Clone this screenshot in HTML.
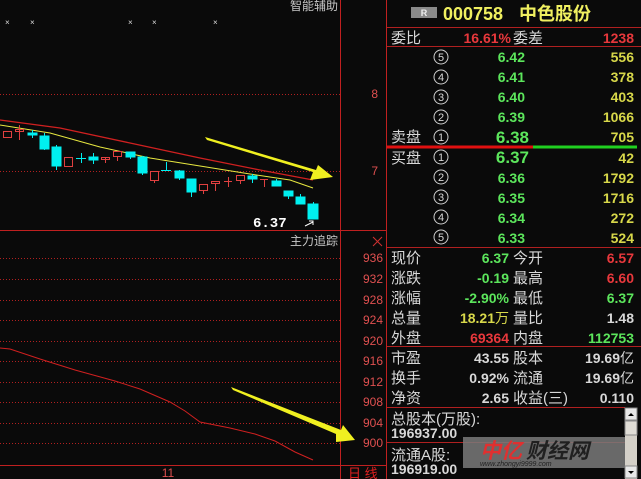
<!DOCTYPE html>
<html><head><meta charset="utf-8"><style>
html,body{margin:0;padding:0;background:#0a0a0a;width:641px;height:479px;overflow:hidden}
svg{display:block}
text{font-family:"Liberation Sans","Noto Sans CJK SC",sans-serif}
.cn{font-size:15px;fill:#d8d8d8}
.n{font-size:14px;font-weight:bold}
.g{fill:#5ce65c}.r{fill:#e8383c}.y{fill:#d8d84a}.w{fill:#d8d8d8}
.ax{font-size:12px;fill:#e05050}
.cd{font-size:11px;fill:#d8d8d8}
</style></head><body>
<svg width="641" height="479" viewBox="0 0 641 479" xmlns="http://www.w3.org/2000/svg">
<rect width="641" height="479" fill="#0a0a0a"/>
<g stroke="#c02020" stroke-width="1" fill="none">
<line x1="340.5" y1="0" x2="340.5" y2="479"/>
<line x1="386.5" y1="0" x2="386.5" y2="479"/>
<line x1="0" y1="230.5" x2="387" y2="230.5"/>
<line x1="0" y1="465.5" x2="387" y2="465.5"/>
</g>
<g stroke="#b02020" stroke-dasharray="1,2">
<line x1="0" y1="94.5" x2="340" y2="94.5"/>
<line x1="0" y1="171.5" x2="340" y2="171.5"/>
<line x1="0" y1="258.5" x2="340" y2="258.5"/>
<line x1="0" y1="279.5" x2="340" y2="279.5"/>
<line x1="0" y1="300.5" x2="340" y2="300.5"/>
<line x1="0" y1="320.5" x2="340" y2="320.5"/>
<line x1="0" y1="341.5" x2="340" y2="341.5"/>
<line x1="0" y1="361.5" x2="340" y2="361.5"/>
<line x1="0" y1="382.5" x2="340" y2="382.5"/>
<line x1="0" y1="402.5" x2="340" y2="402.5"/>
<line x1="0" y1="423.5" x2="340" y2="423.5"/>
<line x1="0" y1="443.5" x2="340" y2="443.5"/>
</g>
<text x="338" y="10" text-anchor="end" style="font-size:12px;fill:#c8c8c8">智能辅助</text>
<text x="338" y="245" text-anchor="end" style="font-size:12px;fill:#c8c8c8">主力追踪</text>
<g fill="#ddd" style="font-size:8px"><text x="5" y="25">×</text><text x="30" y="25">×</text><text x="128" y="25">×</text><text x="152" y="25">×</text><text x="213" y="25">×</text></g>
<text x="378" y="98" text-anchor="end" class="ax">8</text>
<text x="378" y="175" text-anchor="end" class="ax">7</text>
<g class="ax" text-anchor="end"><text x="383" y="262">936</text><text x="383" y="283">932</text><text x="383" y="304">928</text><text x="383" y="324">924</text><text x="383" y="345">920</text><text x="383" y="365">916</text><text x="383" y="386">912</text><text x="383" y="406">908</text><text x="383" y="427">904</text><text x="383" y="447">900</text></g>
<path d="M373 237l9 9M382 237l-9 9" stroke="#d03030"/>
<text x="168" y="477" text-anchor="middle" class="ax">11</text>
<text x="348" y="478" style="font-size:13px;fill:#e02020">日 线</text>
<polyline points="0,120 60,128 130,143 200,158 260,170 313,180" fill="none" stroke="#d02020" stroke-width="1.3"/>
<polyline points="0,125 50,133 100,147 150,158 200,166 250,174 290,180 313,188" fill="none" stroke="#e8e840" stroke-width="1"/>
<g stroke="#e04040" fill="none">
<rect x="3.5" y="131.5" width="8" height="6"/>
<line x1="19.5" y1="125" x2="19.5" y2="140"/><rect x="15.5" y="129.5" width="8" height="2"/>
<rect x="64.5" y="157.5" width="8" height="9"/>
<line x1="105.5" y1="157" x2="105.5" y2="163"/><rect x="101.5" y="157.5" width="8" height="2"/>
<rect x="113.5" y="151.5" width="8" height="5"/><line x1="117.5" y1="156" x2="117.5" y2="161"/>
<rect x="150.5" y="171.5" width="8" height="9"/><line x1="154.5" y1="180" x2="154.5" y2="183"/>
<rect x="199.5" y="184.5" width="8" height="6"/><line x1="203.5" y1="190" x2="203.5" y2="194"/>
<rect x="211.5" y="181.5" width="8" height="2"/><line x1="215.5" y1="183" x2="215.5" y2="191"/>
<line x1="224" y1="181.5" x2="232" y2="181.5"/><line x1="228.5" y1="177" x2="228.5" y2="187"/>
<rect x="236.5" y="175.5" width="8" height="5"/><line x1="240.5" y1="180" x2="240.5" y2="184"/>
<line x1="260" y1="179.5" x2="268" y2="179.5"/><line x1="264.5" y1="179" x2="264.5" y2="187"/>
</g>
<g fill="#00f0f0" stroke="#00f0f0">
<rect x="28" y="133" width="9" height="2"/><line x1="32.5" y1="130" x2="32.5" y2="138"/>
<rect x="40" y="136" width="9" height="13"/><line x1="44.5" y1="133" x2="44.5" y2="150"/>
<rect x="52" y="147" width="9" height="19"/><line x1="56.5" y1="145" x2="56.5" y2="170"/>
<line x1="76" y1="158.5" x2="86" y2="158.5"/><line x1="81.5" y1="153" x2="81.5" y2="163"/>
<rect x="89" y="157" width="9" height="3"/><line x1="93.5" y1="153" x2="93.5" y2="164"/>
<rect x="126" y="152" width="9" height="5"/><line x1="130.5" y1="157" x2="130.5" y2="159"/>
<rect x="138" y="157" width="9" height="16"/><line x1="142.5" y1="156" x2="142.5" y2="175"/>
<line x1="161" y1="170.5" x2="171" y2="170.5"/><line x1="166.5" y1="162" x2="166.5" y2="171"/>
<rect x="175" y="171" width="9" height="7"/><line x1="179.5" y1="170" x2="179.5" y2="180"/>
<rect x="187" y="179" width="9" height="13"/><line x1="191.5" y1="192" x2="191.5" y2="197"/>
<rect x="248" y="176" width="9" height="3"/><line x1="252.5" y1="174" x2="252.5" y2="183"/>
<rect x="272" y="181" width="9" height="5"/><line x1="276.5" y1="179" x2="276.5" y2="186"/>
<rect x="284" y="191" width="9" height="5"/><line x1="288.5" y1="196" x2="288.5" y2="199"/>
<rect x="296" y="197" width="9" height="7"/><line x1="300.5" y1="194" x2="300.5" y2="197"/>
<rect x="308" y="204" width="10" height="15"/><line x1="313.5" y1="202" x2="313.5" y2="204"/>
</g>
<text x="253" y="227" style="font-size:14px;font-weight:bold;fill:#fff;font-family:'Liberation Mono',monospace">6.37</text>
<path d="M305 226l8-4M309 221h4v4" stroke="#fff" fill="none"/>
<polyline points="0,348 10,349 40,359 75,370 115,381 140,389 170,402 185,411 200,422 230,428 255,434 275,441 295,452 313,460" fill="none" stroke="#d02020" stroke-width="1"/>
<polygon points="205,137 207,140 313,172 310,180 333,177 318,165 316,170" fill="#f0f020"/>
<polygon points="231,387 233,390 336,434 336,442 355,440 343,425 341,430" fill="#f0f020"/>

<g stroke="#b02020">
<line x1="387" y1="27.5" x2="641" y2="27.5"/>
<line x1="387" y1="46.5" x2="641" y2="46.5"/>
<line x1="387" y1="247.5" x2="641" y2="247.5"/>
<line x1="387" y1="346.5" x2="641" y2="346.5"/>
<line x1="387" y1="407.5" x2="625" y2="407.5"/>
<line x1="387" y1="442.5" x2="625" y2="442.5"/>
</g>
<line x1="387" y1="147" x2="533" y2="147" stroke="#e01010" stroke-width="3"/>
<line x1="533" y1="147" x2="637" y2="147" stroke="#20d020" stroke-width="3"/>
<rect x="411" y="7" width="26" height="11" fill="#8a8a8a"/>
<text x="424" y="16" text-anchor="middle" style="font-size:9px;font-weight:bold;fill:#eee">R</text>
<text x="443" y="20" style="font-size:18px;font-weight:bold;fill:#f0f060">000758</text>
<text x="519" y="20" style="font-size:18px;font-weight:bold;fill:#f0f060">中色股份</text>

<text x="391" y="43" class="cn">委比</text>
<text x="511" y="43" text-anchor="end" class="n r">16.61%</text>
<text x="513" y="43" class="cn">委差</text>
<text x="634" y="43" text-anchor="end" class="n r">1238</text>

<g fill="none" stroke="#d0d0d0" stroke-width="1">
<circle cx="441" cy="57" r="7"/><circle cx="441" cy="77" r="7"/><circle cx="441" cy="97" r="7"/><circle cx="441" cy="117" r="7"/><circle cx="441" cy="137" r="7"/>
<circle cx="441" cy="157" r="7"/><circle cx="441" cy="177" r="7"/><circle cx="441" cy="197" r="7"/><circle cx="441" cy="217" r="7"/><circle cx="441" cy="237" r="7"/>
</g>
<g class="cd" text-anchor="middle">
<text x="441" y="61">5</text><text x="441" y="81">4</text><text x="441" y="101">3</text><text x="441" y="121">2</text><text x="441" y="141">1</text>
<text x="441" y="161">1</text><text x="441" y="181">2</text><text x="441" y="201">3</text><text x="441" y="221">4</text><text x="441" y="241">5</text>
</g>
<text x="391" y="142" class="cn">卖盘</text>
<text x="391" y="163" class="cn">买盘</text>
<g class="n g" text-anchor="end">
<text x="525" y="62">6.42</text><text x="525" y="82">6.41</text><text x="525" y="102">6.40</text><text x="525" y="122">6.39</text>
<text x="529" y="143" style="font-size:17px">6.38</text><text x="529" y="163" style="font-size:17px">6.37</text>
<text x="525" y="183">6.36</text><text x="525" y="203">6.35</text><text x="525" y="223">6.34</text><text x="525" y="243">6.33</text>
</g>
<g class="n y" text-anchor="end">
<text x="634" y="62">556</text><text x="634" y="82">378</text><text x="634" y="102">403</text><text x="634" y="122">1066</text><text x="634" y="142">705</text>
<text x="634" y="163">42</text><text x="634" y="183">1792</text><text x="634" y="203">1716</text><text x="634" y="223">272</text><text x="634" y="243">524</text>
</g>

<g class="cn">
<text x="391" y="263">现价</text><text x="391" y="283">涨跌</text><text x="391" y="303">涨幅</text><text x="391" y="323">总量</text><text x="391" y="343">外盘</text>
<text x="513" y="263">今开</text><text x="513" y="283">最高</text><text x="513" y="303">最低</text><text x="513" y="323">量比</text><text x="513" y="343">内盘</text>
<text x="391" y="363">市盈</text><text x="391" y="383">换手</text><text x="391" y="403">净资</text>
<text x="513" y="363">股本</text><text x="513" y="383">流通</text><text x="513" y="403">收益(三)</text>
</g>
<g class="n" text-anchor="end">
<text x="509" y="263" class="g">6.37</text><text x="509" y="283" class="g">-0.19</text><text x="509" y="303" class="g">-2.90%</text>
<text x="495" y="323" class="y">18.21</text><text x="509" y="343" class="r">69364</text>
<text x="634" y="263" class="r">6.57</text><text x="634" y="283" class="r">6.60</text><text x="634" y="303" class="g">6.37</text>
<text x="634" y="323" class="w">1.48</text><text x="634" y="343" class="g">112753</text>
<text x="509" y="363" class="w">43.55</text><text x="509" y="383" class="w">0.92%</text><text x="509" y="403" class="w">2.65</text>
<text x="620" y="363" class="w">19.69</text><text x="620" y="383" class="w">19.69</text><text x="634" y="403" class="w">0.110</text>
</g>
<text x="495" y="323" style="font-size:14px;fill:#d8d84a">万</text>
<text x="620" y="363" class="cn" style="font-size:14px">亿</text>
<text x="620" y="383" class="cn" style="font-size:14px">亿</text>

<text x="391" y="424" class="cn">总股本(万股):</text>
<text x="391" y="438" class="n w">196937.00</text>
<text x="391" y="460" class="cn">流通A股:</text>
<text x="391" y="474" class="n w">196919.00</text>

<rect x="625" y="408" width="12" height="71" fill="#d4d0c8"/>
<rect x="625" y="408" width="12" height="12" fill="#e8e8e8" stroke="#888"/>
<path d="M628 416l3-3 3 3z" fill="#000"/>
<rect x="625" y="421" width="12" height="14" fill="#e0ddd6" stroke="#888"/>
<rect x="625" y="466" width="12" height="12" fill="#e8e8e8" stroke="#888"/>
<path d="M628 471l3 3 3-3z" fill="#000"/>
<rect x="463" y="437" width="162" height="31" fill="#7a7a7a" opacity="0.85"/>
<text x="480" y="458" style="font-size:21px;font-weight:bold;font-style:italic;fill:#e03030">中亿</text>
<text x="526" y="458" style="font-size:21px;font-weight:bold;font-style:italic;fill:#202020">财经网</text>
<text x="480" y="466" style="font-size:7px;font-style:italic;fill:#222">www.zhongyi9999.com</text>
</svg>
</body></html>
